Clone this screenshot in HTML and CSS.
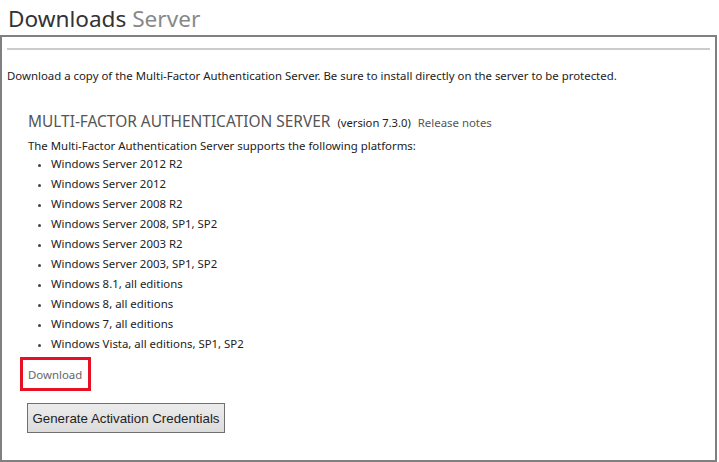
FILE: index.html
```html
<!DOCTYPE html>
<html>
<head>
<meta charset="utf-8">
<link rel="stylesheet" href="styles.css">
</head>
<body>
<h1 class="title">Downloads <span class="sub">Server</span></h1>
<div class="box">
  <div class="rule"></div>
  <p class="intro">Download a copy of the Multi-Factor Authentication Server. Be sure to install directly on the server to be protected.</p>
  <div class="section">
    <div class="heading">MULTI-FACTOR AUTHENTICATION SERVER <span class="ver">(version 7.3.0)</span> <span class="notes">Release notes</span></div>
    <p class="supports">The Multi-Factor Authentication Server supports the following platforms:</p>
    <ul class="platforms">
      <li>Windows Server 2012 R2</li>
      <li>Windows Server 2012</li>
      <li>Windows Server 2008 R2</li>
      <li>Windows Server 2008, SP1, SP2</li>
      <li>Windows Server 2003 R2</li>
      <li>Windows Server 2003, SP1, SP2</li>
      <li>Windows 8.1, all editions</li>
      <li>Windows 8, all editions</li>
      <li>Windows 7, all editions</li>
      <li>Windows Vista, all editions, SP1, SP2</li>
    </ul>
    <div class="dl-wrap"><span class="dl">Download</span></div>
    <button class="gen">Generate Activation Credentials</button>
  </div>
</div>
</body>
</html>
```
FILE: styles.css
```css
html, body { margin: 0; padding: 0; background: #fff; }
body { font-family: "Noto Sans", "Open Sans", sans-serif; color: #222; font-size: 11.4px; }
.title {
  margin: 0;
  padding: 4px 0 0 8px;
  height: 31px;
  font-weight: normal;
  font-size: 22.6px;
  line-height: 30px;
  color: #333;
}
.title .sub { color: #888; }
.box {
  width: 713px;
  height: 423px;
  border: 2px solid #808080;
}
.rule {
  height: 2px;
  background: #cccccc;
  margin: 11px 5px 0 5px;
}
.intro { margin: 18px 0 0 5px; line-height: 16px; }
.section { padding-left: 26px; }
.heading { margin-top: 27px; font-size: 15.45px; color: #555; line-height: 20px; }
.heading .ver { font-size: 11.2px; color: #222; margin-left: 3px; }
.heading .notes { font-size: 11.4px; color: #555; margin-left: 3px; }
.supports { margin: 5px 0 0 0; line-height: 16px; }
.platforms { margin: 0; padding-left: 23px; }
.platforms li { line-height: 20px; }
.platforms li::marker { font-size: 9px; color: #444; }
.dl-wrap {
  margin: 3px 0 0 -8px;
  width: 60px;
  height: 28px;
  border: 3px solid #e81123;
  display: flex;
  align-items: center;
  padding-left: 5px;
}
.dl { color: #666; }
.gen {
  display: block;
  margin: 12px 0 0 -1px;
  width: 198px;
  height: 30px;
  font-family: "Liberation Sans", Arial, sans-serif;
  font-size: 13.3px;
  white-space: nowrap;
  color: #222;
  border: 1px solid #707070;
  border-radius: 0;
  background: linear-gradient(#ececec, #dcdcdc);
  padding: 0;
}
```
